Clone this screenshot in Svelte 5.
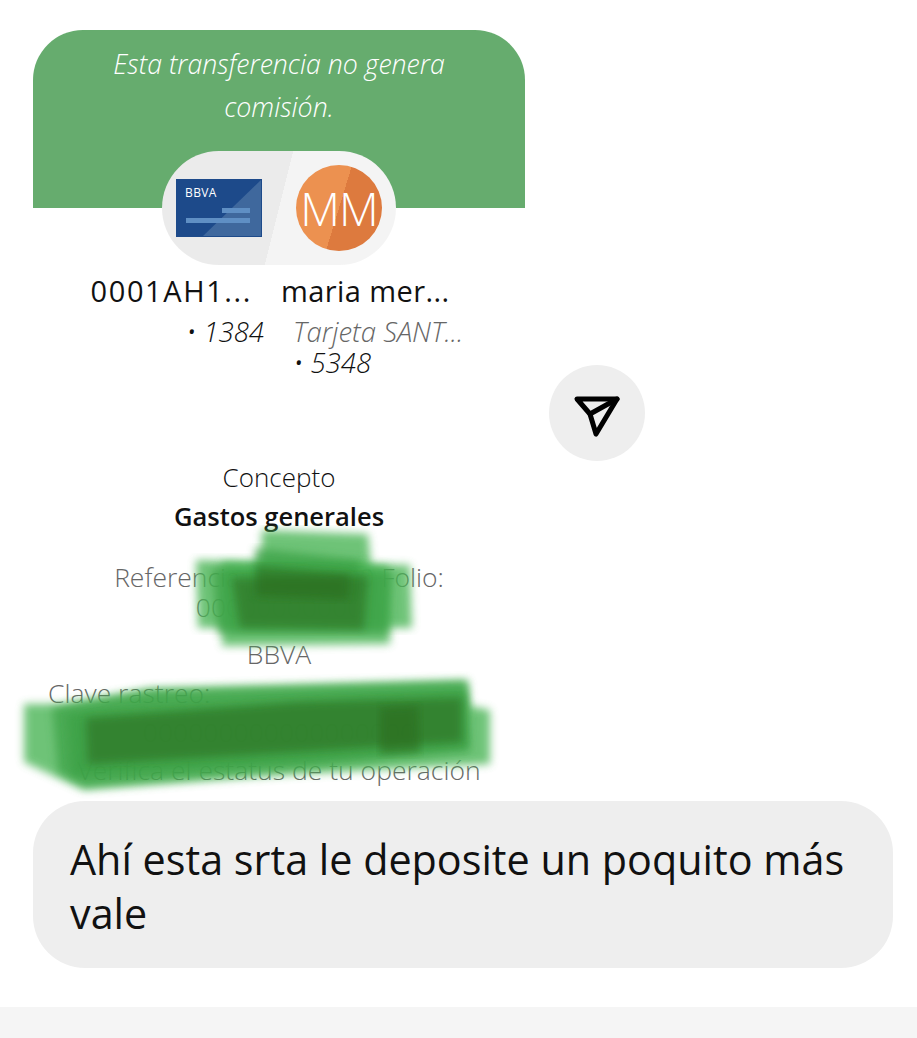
<script>
  const strokes = [
    { points: "262,530 368,534 372,576 260,580", tone: "light" },
    { points: "196,560 410,565 412,628 198,628", tone: "light" },
    { points: "222,562 388,566 390,644 222,646", tone: "light" },
    { points: "255,548 360,560 363,596 254,594", tone: "mid" },
    { points: "212,568 392,572 388,634 218,634", tone: "mid" },
    { points: "232,578 368,576 364,630 240,628", tone: "dark" },
    { points: "256,566 350,574 348,600 256,596", tone: "dark" },
    { points: "24,704 60,704 150,688 468,680 470,706 490,710 490,764 300,774 84,790 24,762", tone: "light" },
    { points: "52,708 150,692 466,682 470,752 300,768 84,786 58,772", tone: "mid" },
    { points: "68,714 466,692 468,746 300,760 72,776", tone: "mid" },
    { points: "86,718 300,702 462,698 462,742 88,764", tone: "dark" },
    { points: "380,708 418,706 420,752 380,754", tone: "dark" },
  ];
</script>

<div class="page">
  <div class="main">
    <section class="transfer">
      <header class="banner">
        <p>Esta transferencia no genera comisión.</p>
      </header>

      <div class="pill">
        <svg class="card" viewBox="0 0 86 58" width="86" height="58" aria-label="BBVA">
          <rect width="86" height="58" fill="#1d4a8a" />
          <path d="M27 57 L85 1 V57 Z" fill="#3f689d" />
          <rect x="46" y="29" width="28" height="5" fill="#5f8fc4" />
          <rect x="10" y="39" width="64" height="5" fill="#5f8fc4" />
          <text x="9" y="18" class="card-logo">BBVA</text>
        </svg>
        <div class="avatar">MM</div>
      </div>

      <div class="names">
        <span class="account-name">0001AH1...</span>
        <span class="person-name">maria mer...</span>
      </div>

      <div class="accounts">
        <div class="from"><i>• 1384</i></div>
        <div class="to">
          <em>Tarjeta SANT...</em>
          <i>• 5348</i>
        </div>
      </div>

      <div class="concept">
        <p class="label">Concepto</p>
        <p class="value">Gastos generales</p>
      </div>

      <div class="meta">
        <p class="ref">Referencia: 00000000 Folio:</p>
        <p class="folio">00000000000</p>
        <p class="bank">BBVA</p>
        <p class="trace">Clave rastreo:</p>
        <p class="trace-code">000000000000000000</p>
        <p class="status">Verifica el estatus de tu operación</p>
      </div>
    </section>

    <button class="share" aria-label="Compartir">
      <svg viewBox="0 0 48 44" width="48" height="44" fill="none" stroke="#000" stroke-width="5" stroke-linejoin="round" stroke-linecap="round">
        <path d="M4 4 H44 L23 39 L17 19 Z" />
        <path d="M17 19 L44 4" />
      </svg>
    </button>
  </div>

  <div class="bubble">Ahí esta srta le deposite un poquito más vale</div>
  <div class="footer"></div>

  <svg class="scribble" viewBox="0 0 917 1038" width="917" height="1038" aria-hidden="true">
    <defs>
      <filter id="soft" x="-10%" y="-10%" width="120%" height="120%">
        <feGaussianBlur stdDeviation="4" />
      </filter>
    </defs>
    {#each strokes as s}
      <polygon points={s.points} class={s.tone} filter="url(#soft)" />
    {/each}
  </svg>
</div>

<style>
  :global(body) {
    margin: 0;
    background: #fff;
  }

  .page {
    position: relative;
    width: 917px;
    height: 1038px;
    overflow: hidden;
    font-family: "Open Sans", Lato, sans-serif;
    color: #111;
  }

  p {
    margin: 0;
  }

  .main {
    display: flex;
    gap: 24px;
    padding: 30px 0 0 33px;
    height: 801px;
    box-sizing: border-box;
  }

  .transfer {
    width: 492px;
    flex-shrink: 0;
  }

  .banner {
    height: 178px;
    background: #66ac6e;
    border-radius: 50px 50px 0 0;
    box-sizing: border-box;
    padding: 12px 70px 0;
    text-align: center;
    color: #fff;
    font-size: 26.7px;
    font-style: italic;
    font-weight: 300;
    line-height: 43px;
  }

  .pill {
    display: flex;
    align-items: center;
    justify-content: space-between;
    box-sizing: border-box;
    width: 234px;
    height: 114px;
    margin: -57px auto 0;
    padding: 0 14px;
    border-radius: 57px;
    background: linear-gradient(104deg, #ebebeb 50%, #f4f4f4 50%);
    position: relative;
  }

  .card-logo {
    fill: #fff;
    font-size: 12px;
    font-weight: 400;
    letter-spacing: 0.4px;
  }

  .avatar {
    width: 86px;
    height: 86px;
    border-radius: 50%;
    background: linear-gradient(107deg, #ec9150 50%, #dd7a3e 50%);
    color: #fff;
    font-size: 46px;
    font-weight: 300;
    line-height: 86px;
    text-align: center;
    letter-spacing: -1px;
  }

  .names {
    display: flex;
    justify-content: center;
    gap: 29px;
    padding: 8px 18px 0 0;
    font-size: 29px;
    font-weight: 500;
    line-height: 36px;
  }

  .account-name {
    letter-spacing: 1.6px;
  }

  .person-name {
    letter-spacing: 0.4px;
  }

  .accounts {
    display: grid;
    grid-template-columns: 231px 1fr;
    gap: 29px;
    margin-top: 7px;
    font-size: 27.5px;
    font-weight: 300;
    line-height: 31px;
  }

  .from {
    text-align: right;
  }

  .to {
    display: flex;
    flex-direction: column;
  }

  .to em {
    color: #666;
  }

  .concept {
    margin-top: 80px;
    text-align: center;
    line-height: 39px;
    width: 492px;
  }

  .label {
    font-size: 26px;
    font-weight: 300;
  }

  .value {
    font-size: 25.5px;
    font-weight: 600;
  }

  .meta {
    margin-top: 26px;
    text-align: center;
    color: #666;
    font-size: 26.5px;
    font-weight: 300;
    line-height: 30px;
    width: 492px;
  }

  .bank {
    margin-top: 17px;
  }

  .trace {
    margin-top: 9px;
    text-align: left;
    padding-left: 15px;
  }

  .trace-code {
    margin-top: 9px;
  }

  .status {
    margin-top: 8px;
  }

  .share {
    display: flex;
    align-items: center;
    justify-content: center;
    width: 96px;
    height: 96px;
    margin-top: 335px;
    padding: 8px 0 0;
    box-sizing: border-box;
    border: 0;
    border-radius: 50%;
    background: #eee;
  }

  .bubble {
    box-sizing: border-box;
    width: 860px;
    height: 167px;
    margin-left: 33px;
    padding: 31px 37px 0;
    border-radius: 52px;
    background: #eee;
    color: #111;
    font-size: 41.3px;
    line-height: 54px;
  }

  .footer {
    height: 31px;
    margin-top: 39px;
    background: #f5f5f5;
  }

  .scribble {
    position: absolute;
    inset: 0;
    pointer-events: none;
  }

  .light {
    fill: #4cb556;
    opacity: 0.8;
  }

  .mid {
    fill: #3aa044;
    opacity: 0.7;
  }

  .dark {
    fill: #2c6a1c;
    opacity: 0.55;
  }
</style>
